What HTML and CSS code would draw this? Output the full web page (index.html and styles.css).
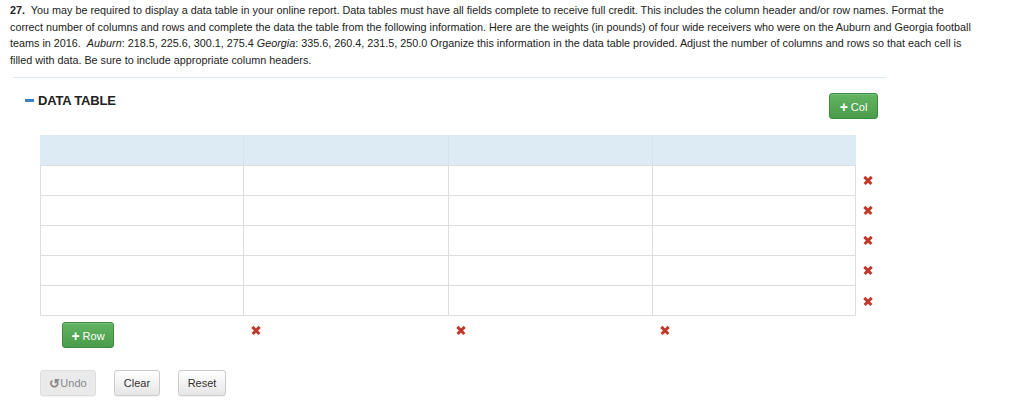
FILE: index.html
```html
<!DOCTYPE html>
<html>
<head>
<meta charset="utf-8">
<link rel="stylesheet" href="styles.css">
</head>
<body>
<div class="page">
  <p class="question"><b>27.</b>&nbsp; You may be required to display a data table in your online report. Data tables must have all fields complete to receive full credit. This includes the column header and/or row names. Format the correct number of columns and rows and complete the data the table from the following information. Here are the weights (in pounds) of four wide receivers who were on the Auburn and Georgia football teams in 2016.&nbsp; <i>Auburn</i>: 218.5, 225.6, 300.1, 275.4 <i>Georgia</i>: 335.6, 260.4, 231.5, 250.0 Organize this information in the data table provided. Adjust the number of columns and rows so that each cell is filled with data. Be sure to include appropriate column headers.</p>
  <hr class="sep">
  <div class="dt">
    <div class="dt-head">
      <h3 class="dt-title"><span class="minus"></span>DATA TABLE</h3>
      <button class="btn btn-green btn-col"><span class="plus">+</span> Col</button>
    </div>
    <div class="grid">
      <div class="cell hd"></div><div class="cell hd"></div><div class="cell hd"></div><div class="cell hd"></div><div class="side"></div>
      <div class="cell"></div><div class="cell"></div><div class="cell"></div><div class="cell"></div><div class="side"><span class="x"></span></div>
      <div class="cell"></div><div class="cell"></div><div class="cell"></div><div class="cell"></div><div class="side"><span class="x"></span></div>
      <div class="cell"></div><div class="cell"></div><div class="cell"></div><div class="cell"></div><div class="side"><span class="x"></span></div>
      <div class="cell"></div><div class="cell"></div><div class="cell"></div><div class="cell"></div><div class="side"><span class="x"></span></div>
      <div class="cell last"></div><div class="cell last"></div><div class="cell last"></div><div class="cell last"></div><div class="side"><span class="x"></span></div>
      <div class="foot first"><button class="btn btn-green btn-row"><span class="plus">+</span> Row</button></div>
      <div class="foot"><span class="x"></span></div>
      <div class="foot"><span class="x"></span></div>
      <div class="foot"><span class="x"></span></div>
      <div class="side"></div>
    </div>
    <div class="actions">
      <button class="btn btn-def disabled"><span class="undo-ic">&#x21BA;</span>Undo</button>
      <button class="btn btn-def">Clear</button>
      <button class="btn btn-def">Reset</button>
    </div>
  </div>
</div>
</body>
</html>
```
FILE: styles.css
```css
html, body { margin: 0; padding: 0; background: #fff; }
body { font-family: "Liberation Sans", Arial, sans-serif; color: #333; }
.page { width: 1024px; height: 420px; overflow: hidden; }
.question {
  margin: 0; padding: 2px 0 0 10px; width: 968px;
  font-size: 10.8px; line-height: 16.5px; color: #222;
}
.question b { font-weight: bold; }
.sep { margin: 9px 138px 0 13px; border: 0; border-top: 1px solid #dbe8f1; height: 0; }
.dt { padding: 0 0 0 40px; }
.dt-head { display: flex; justify-content: space-between; align-items: flex-start; width: 853px; margin-left: -15px; padding-top: 15px; }
.dt-title { margin: 0; font-size: 13px; font-weight: bold; color: #222; display: flex; align-items: center; letter-spacing: -0.2px; }
.minus { display: inline-block; width: 9px; height: 3px; background: #3f7fc4; margin-right: 4px; }
.btn {
  font-family: "Liberation Sans", Arial, sans-serif; font-size: 11px; height: 26px;
  border-radius: 3px; padding: 0 8px; cursor: pointer; line-height: 24px;
}
.btn-green {
  color: #fff; border: 1px solid #3d8b3d;
  background: linear-gradient(#62b462, #4a9c4a);
  box-shadow: inset 0 1px 0 rgba(255,255,255,0.15);
}
.plus { font-weight: bold; font-size: 14px; position: relative; top: 1px; }
.btn-col { margin-top: 0; width: 49px; padding: 0; }
.grid {
  display: grid; grid-template-columns: 203px 205px 204px 204px 30px;
  margin-top: 16px;
}
.cell { height: 29px; border-left: 1px solid #ddd; border-top: 1px solid #ddd; }
.cell:nth-child(5n+4) { border-right: 1px solid #ddd; }
.cell.hd { background: #dcebf4; border-color: #dcebf4; border-left: 1px solid #d5e3ec; }
.cell.hd:first-child { border-left-color: #dcebf4; }
.cell.hd:nth-child(4) { border-right-color: #dcebf4; }
.cell.last { border-bottom: 1px solid #ddd; }
.side { display: flex; align-items: center; padding-left: 8px; }
.x {
  display: inline-block; width: 8px; height: 8px; position: relative;
}
.x::before, .x::after {
  content: ""; position: absolute; left: -1px; top: 3px; width: 10px; height: 2.6px; background: #c0392b;
}
.x::before { transform: rotate(45deg); }
.x::after { transform: rotate(-45deg); }
.foot { height: 31px; display: flex; align-items: flex-start; padding-left: 9px; padding-top: 10px; box-sizing: border-box; }
.foot.first { padding-left: 22px; padding-top: 6px; }
.btn-row { width: 52px; padding: 0; }
.actions { display: flex; gap: 18px; margin-top: 23px; }
.btn-def {
  color: #333; border: 1px solid #ccc; background: linear-gradient(#fff, #e6e6e6);
  box-shadow: 0 1px 1px rgba(0,0,0,0.05); font-size: 11px;
}
.btn-def.disabled { color: #888; background: #eaeaea; border-color: #ddd; width: 56px; padding: 0; }
.undo-ic { font-size: 13px; font-weight: bold; position: relative; top: 1px; }
.actions .btn-def:nth-child(2) { width: 46px; padding: 0; }
.actions .btn-def:nth-child(3) { width: 48px; padding: 0; }
```
